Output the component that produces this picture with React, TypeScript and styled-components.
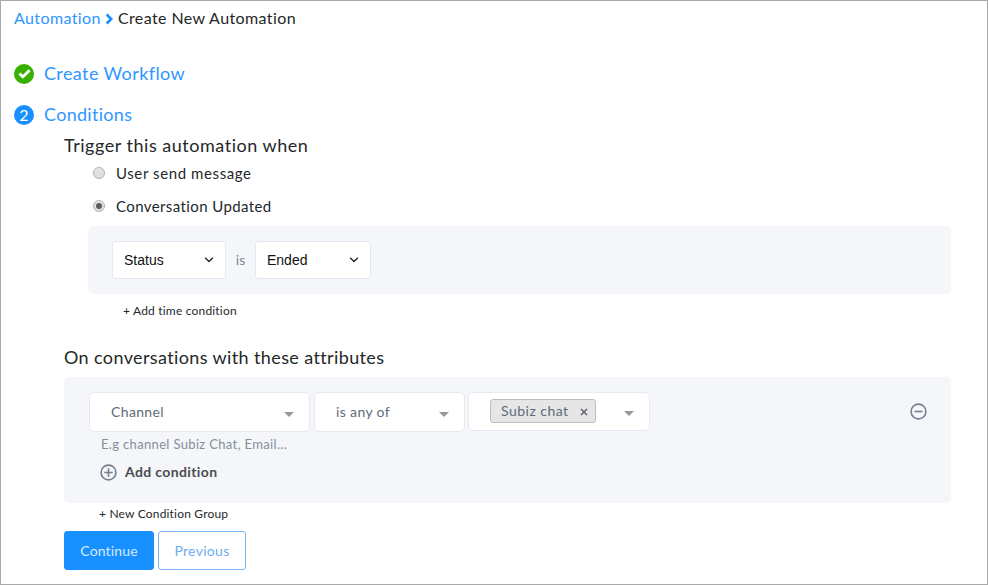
import React from 'react';
import styled, { createGlobalStyle } from 'styled-components';

const GlobalStyle = createGlobalStyle`
  *, *::before, *::after { box-sizing: border-box; }
  body { margin: 0; background: #fff; font-family: Lato, "Open Sans", sans-serif; }
  button { font: inherit; background: none; border: 0; padding: 0; }
`;

const Frame = styled.main`
  width: 988px;
  height: 585px;
  border: 1px solid #a9a9a9;
  color: #252729;
  background: #fff;
`;

const Breadcrumb = styled.nav`
  display: flex;
  align-items: center;
  height: 34px;
  padding: 0 0 2px 13px;
  font-size: 16px;
  letter-spacing: 0.4px;
  svg { margin: 3px 4px 0 4px; }
`;

const Crumb = styled.a`
  color: #3096ff;
`;

const Step = styled.div<{ $top: number }>`
  display: flex;
  align-items: center;
  gap: 10px;
  height: 40px;
  margin-top: ${p => p.$top}px;
  padding-left: 13px;
`;

const StepTitle = styled.h2<{ $tracking: number }>`
  margin: 0;
  padding-bottom: 2px;
  font-size: 18px;
  font-weight: 400;
  line-height: 22px;
  letter-spacing: ${p => p.$tracking}px;
  color: #3096ff;
`;

const StepBadge = styled.span<{ $color: string }>`
  display: flex;
  align-items: center;
  justify-content: center;
  width: 20px;
  height: 20px;
  border-radius: 50%;
  background: ${p => p.$color};
  color: #fff;
  font-size: 16px;
  line-height: 20px;
`;

const Content = styled.div`
  padding: 0 36px 0 63px;
`;

const Heading = styled.h3<{ $top?: number; $tracking: number }>`
  margin: ${p => p.$top ?? 0}px 0 0;
  font-size: 18px;
  font-weight: 400;
  line-height: 20px;
  letter-spacing: ${p => p.$tracking}px;
`;

const RadioGroup = styled.div`
  padding-top: 1px;
`;

const RadioOption = styled.label<{ $tracking: number }>`
  display: flex;
  align-items: center;
  gap: 11px;
  height: 33px;
  padding-left: 29px;
  font-size: 15px;
  letter-spacing: ${p => p.$tracking}px;
`;

const Radio = styled.span`
  display: flex;
  align-items: center;
  justify-content: center;
  width: 12px;
  height: 12px;
  border: 1px solid #b1b1b1;
  border-radius: 50%;
  background: linear-gradient(#e6e6e6, #dcdcdc);
`;

const RadioDot = styled.span`
  width: 6px;
  height: 6px;
  border-radius: 50%;
  background: #5c5c5c;
`;

const TriggerPanel = styled.section`
  display: flex;
  align-items: center;
  height: 68px;
  margin: 4px 0 0 24px;
  padding-left: 24px;
  border-radius: 5px;
  background: #f5f6fa;
`;

const NativeSelect = styled.div<{ $width: number }>`
  display: flex;
  align-items: center;
  justify-content: space-between;
  width: ${p => p.$width}px;
  height: 38px;
  padding: 0 11px 0 11px;
  border: 1px solid #e3e9f1;
  border-radius: 3px;
  background: #fff;
  color: #111;
  font: 14px "Liberation Sans", sans-serif;
`;

const Joiner = styled.span`
  width: 29px;
  padding-bottom: 2px;
  text-align: center;
  font-size: 14px;
  color: #7b8591;
`;

const TextAction = styled.button<{ $height: number; $indent: number }>`
  display: flex;
  align-items: center;
  height: ${p => p.$height}px;
  margin-left: ${p => p.$indent}px;
  font-size: 12px;
  letter-spacing: 0.19px;
  color: #26282b;
`;

const ConditionPanel = styled.section`
  height: 126px;
  margin-top: 10px;
  padding: 15px 24px 0 25px;
  border-radius: 5px;
  background: #f5f6fa;
`;

const ConditionRow = styled.div`
  display: flex;
  align-items: flex-start;
  gap: 4px;
`;

const Select = styled.div<{ $width: number; $height?: number }>`
  display: flex;
  align-items: center;
  justify-content: space-between;
  width: ${p => p.$width}px;
  height: ${p => p.$height ?? 40}px;
  padding: 0 15px 2px 21px;
  border: 1px solid #e4eaf2;
  border-radius: 5px;
  background: #fff;
  font-size: 14px;
  letter-spacing: 0.36px;
  color: #5f6b7a;
`;

const ValueSelect = styled(Select)`
  margin-left: -1px;
`;

const Caret = styled.span`
  margin-top: 6px;
  border: 5px solid transparent;
  border-top-color: #999;
  border-bottom: 0;
`;

const Tag = styled.span`
  display: flex;
  align-items: center;
  justify-content: space-between;
  width: 106px;
  height: 24px;
  padding: 0 7px 1px 10px;
  margin-top: 1px;
  border: 1px solid #bdbdbd;
  border-radius: 3px;
  background: #e6e6e6;
  letter-spacing: 0.48px;
  svg { margin-top: 3px; }
`;

const RemoveButton = styled.button`
  display: flex;
  margin: 11px 0 0 auto;
`;

const Hint = styled.p`
  margin: 2px 0 0 12px;
  font-size: 13px;
  line-height: 20px;
  letter-spacing: 0.34px;
  color: #858e9a;
`;

const AddCondition = styled.button`
  display: flex;
  align-items: center;
  gap: 8px;
  height: 20px;
  margin: 8px 0 0 11px;
  font-size: 14px;
  font-weight: 700;
  letter-spacing: 0.37px;
  color: #4a4c50;
  span { padding-bottom: 2px; }
`;

const Actions = styled.div`
  display: flex;
  gap: 4px;
  margin-top: 8px;
`;

const ActionButton = styled.button<{ $primary?: boolean }>`
  width: ${p => (p.$primary ? 90 : 88)}px;
  height: 39px;
  padding-bottom: 1px;
  border: 1px solid ${p => (p.$primary ? '#1890ff' : '#7db4f2')};
  border-radius: 3px;
  background: ${p => (p.$primary ? '#1890ff' : '#fff')};
  color: ${p => (p.$primary ? '#d5eaff' : '#6fabf0')};
  font-size: 14px;
  letter-spacing: ${p => (p.$primary ? 0.15 : 0.3)}px;
`;

const Chevron = () => (
  <svg width="10" height="6" viewBox="0 0 10 6" fill="none" stroke="#252525" strokeWidth="1.4">
    <path d="M1.2 .8 5 4.5 8.8 .8" />
  </svg>
);

const CircleSign = ({ plus }: { plus?: boolean }) => (
  <svg width="17" height="17" viewBox="0 0 17 17" fill="none" stroke="#737f8d" strokeWidth="1.6">
    <circle cx="8.5" cy="8.5" r="7.4" />
    <path d={plus ? 'M4.3 8.5h8.4M8.5 4.3v8.4' : 'M4.5 8.5h8'} />
  </svg>
);

export default function App() {
  return (
    <>
      <GlobalStyle />
      <Frame>
        <Breadcrumb>
          <Crumb>Automation</Crumb>
          <svg width="9" height="12" viewBox="0 0 9 12" fill="none" stroke="#1890ff" strokeWidth="2.6">
            <path d="M1.7 1.5 6.2 6 1.7 10.5" />
          </svg>
          <span>Create New Automation</span>
        </Breadcrumb>

        <Step $top={19}>
          <StepBadge $color="#37b000">
            <svg width="13" height="10" viewBox="0 0 13 10" fill="none" stroke="#fff" strokeWidth="2.8">
              <path d="M1.4 4.4 4.9 7.8 11.6 1.2" />
            </svg>
          </StepBadge>
          <StepTitle $tracking={0.4}>Create Workflow</StepTitle>
        </Step>
        <Step $top={1}>
          <StepBadge $color="#1890ff">2</StepBadge>
          <StepTitle $tracking={0.3}>Conditions</StepTitle>
        </Step>

        <Content>
          <Heading $tracking={0.52}>Trigger this automation when</Heading>
          <RadioGroup>
            <RadioOption $tracking={0.6}>
              <Radio />
              User send message
            </RadioOption>
            <RadioOption $tracking={0.4}>
              <Radio><RadioDot /></Radio>
              Conversation Updated
            </RadioOption>
          </RadioGroup>
          <TriggerPanel>
            <NativeSelect $width={114}>Status<Chevron /></NativeSelect>
            <Joiner>is</Joiner>
            <NativeSelect $width={116}>Ended<Chevron /></NativeSelect>
          </TriggerPanel>
          <TextAction $height={32} $indent={59}>+ Add time condition</TextAction>

          <Heading $top={21} $tracking={0.38}>On conversations with these attributes</Heading>
          <ConditionPanel>
            <ConditionRow>
              <Select $width={221}>Channel<Caret /></Select>
              <Select $width={151}>is any of<Caret /></Select>
              <ValueSelect $width={182} $height={39}>
                <Tag>
                  Subiz chat
                  <svg width="8" height="8" viewBox="0 0 8 8" stroke="#5f6670" strokeWidth="1.5">
                    <path d="m1 1 6 6M7 1 1 7" />
                  </svg>
                </Tag>
                <Caret />
              </ValueSelect>
              <RemoveButton aria-label="Remove"><CircleSign /></RemoveButton>
            </ConditionRow>
            <Hint>E.g channel Subiz Chat, Email...</Hint>
            <AddCondition><CircleSign plus /><span>Add condition</span></AddCondition>
          </ConditionPanel>
          <TextAction $height={20} $indent={35}>+ New Condition Group</TextAction>

          <Actions>
            <ActionButton $primary>Continue</ActionButton>
            <ActionButton>Previous</ActionButton>
          </Actions>
        </Content>
      </Frame>
    </>
  );
}
